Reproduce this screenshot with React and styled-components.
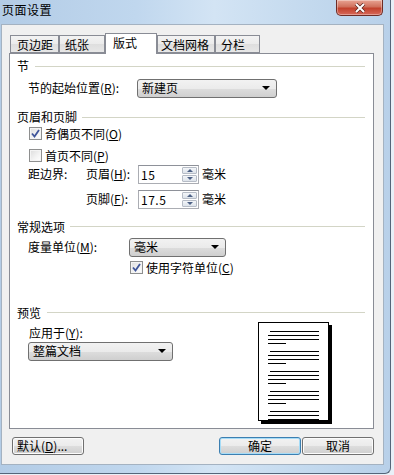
import React from "react";
import styled, { createGlobalStyle } from "styled-components";

const GlobalStyle = createGlobalStyle`
  html, body {
    margin: 0;
    padding: 0;
    background: #e9f0f8;
  }
  body {
    width: 394px;
    height: 475px;
    overflow: hidden;
    font-family: "Noto Sans CJK SC", "DejaVu Sans", sans-serif;
    font-size: 12px;
    color: #000;
  }
`;

const Window = styled.div`
  position: relative;
  width: 391px;
  height: 474px;
  padding: 0 6px 8px 1px;
  box-sizing: border-box;
  border-right: 1px solid #55667a;
  border-bottom: 1px solid #55667a;
  border-bottom-right-radius: 6px;
  background: linear-gradient(90deg, #b3cce6 0%, #c0d7ee 35%, #d3e4f4 55%, #c3d9ee 80%, #b8d0e9 100%);
  display: flex;
  flex-direction: column;
`;

const TitleBar = styled.div`
  height: 24px;
  display: flex;
  align-items: flex-start;
  justify-content: space-between;
`;

const Title = styled.span`
  margin: 2px 0 0 1px;
  font-size: 12px;
  line-height: 16px;
  letter-spacing: 0.5px;
`;

const CloseButton = styled.div`
  width: 45px;
  height: 15px;
  margin-right: 1px;
  border: 1px solid #6e2c25;
  border-top: none;
  border-radius: 0 0 5px 5px;
  background: linear-gradient(#e8a493 0%, #d0705c 45%, #c2412c 55%, #d7695a 100%);
  box-shadow: inset 0 0 0 1px rgba(255, 255, 255, 0.35);
  display: flex;
  align-items: center;
  justify-content: center;
`;

const Client = styled.div`
  height: 442px;
  box-sizing: border-box;
  border: 1px solid #a4b2c1;
  background: #f0f0f0;
  padding: 8px 9px 0 7px;
  display: flex;
  flex-direction: column;
`;

const TabRow = styled.div`
  display: flex;
  align-items: flex-end;
  height: 20px;
  padding-left: 1px;
`;

const Tab = styled.div`
  position: relative;
  box-sizing: border-box;
  width: ${(p) => p.$w}px;
  height: ${(p) => (p.$active ? 21 : 18)}px;
  margin-bottom: ${(p) => (p.$active ? -1 : 0)}px;
  z-index: ${(p) => (p.$active ? 2 : 1)};
  border: 1px solid #898c95;
  border-bottom: ${(p) => (p.$active ? "none" : "1px solid #898c95")};
  background: ${(p) =>
    p.$active ? "#fff" : "linear-gradient(#f3f3f3 0%, #ebebeb 50%, #dedede 51%, #e7e7e7 100%)"};
  padding-left: ${(p) => p.$pl}px;
  padding-top: 2px;
  font-size: 12px;
  line-height: 14px;
  white-space: nowrap;
`;

const Panel = styled.div`
  height: 376px;
  box-sizing: border-box;
  border: 1px solid #898c95;
  background: #fff;
  padding: 0 8px 0 7px;
  display: flex;
  flex-direction: column;
`;

const SectionHead = styled.div`
  height: 14px;
  margin-top: ${(p) => p.$mt}px;
  display: flex;
  align-items: center;
  gap: ${(p) => p.$gap ?? 6}px;
  line-height: 14px;
  white-space: nowrap;
`;

const Rule = styled.div`
  flex: 1;
  height: 1px;
  margin-top: ${(p) => p.$off ?? 2}px;
  background: #d3d5c6;
`;

const Row = styled.div`
  display: flex;
  align-items: center;
  height: ${(p) => p.$h ?? 19}px;
  margin-top: ${(p) => p.$mt}px;
  padding-left: ${(p) => p.$pl ?? 11}px;
  line-height: 14px;
  white-space: nowrap;
`;

const Label = styled.span`
  display: inline-block;
  width: ${(p) => (p.$w ? `${p.$w}px` : "auto")};
  flex: none;
`;

const Select = styled.div`
  box-sizing: border-box;
  width: ${(p) => p.$w}px;
  height: 19px;
  border: 1px solid #707070;
  border-radius: 3px;
  background: linear-gradient(#f2f2f2 0%, #ebebeb 50%, #dddddd 51%, #cfcfcf 100%);
  padding: 0 6px 0 4px;
  display: flex;
  align-items: center;
  justify-content: space-between;
  line-height: 14px;
`;

const Arrow = styled.span`
  width: 0;
  height: 0;
  border-left: 4px solid transparent;
  border-right: 4px solid transparent;
  border-top: 4px solid #000;
`;

const Box = styled.span`
  box-sizing: border-box;
  width: 13px;
  height: 13px;
  border: 1px solid #8e8f8f;
  background: linear-gradient(135deg, #dcdcdc 0%, #f4f4f4 60%, #ffffff 100%);
  box-shadow: inset 0 0 0 1px #f4f4f4;
  display: inline-flex;
  align-items: center;
  justify-content: center;
  margin-right: 3px;
  flex: none;
`;

const SpinField = styled.div`
  box-sizing: border-box;
  width: 61px;
  height: 19px;
  border: 1px solid #abadb3;
  border-top-color: #8e9199;
  background: #fff;
  display: flex;
  align-items: stretch;
  padding: 1px 1px 1px 2px;
`;

const SpinText = styled.span`
  flex: 1;
  line-height: 15px;
  letter-spacing: 0.5px;
`;

const SpinButtons = styled.div`
  width: 15px;
  display: flex;
  flex-direction: column;
  gap: 1px;
`;

const SpinBtn = styled.div`
  flex: 1;
  border: 1px solid #b6bcc6;
  border-radius: 1px;
  background: linear-gradient(#f4f6f9, #dde3ea);
  display: flex;
  align-items: center;
  justify-content: center;
`;

const Tri = styled.span`
  width: 0;
  height: 0;
  border-left: 3px solid transparent;
  border-right: 3px solid transparent;
  ${(p) => (p.$up ? "border-bottom: 3px solid #4d6185;" : "border-top: 3px solid #4d6185;")}
`;

const Unit = styled.span`
  margin-left: 3px;
`;

const PreviewRow = styled.div`
  display: flex;
  align-items: flex-start;
`;

const PreviewLeft = styled.div`
  width: 241px;
  padding-left: 11px;
  box-sizing: border-box;
  display: flex;
  flex-direction: column;
`;

const PageBox = styled.div`
  margin-top: 2px;
`;

const ButtonRow = styled.div`
  display: flex;
  align-items: center;
  margin-top: 8px;
  height: 18px;
`;

const Button = styled.div`
  box-sizing: border-box;
  width: ${(p) => p.$w}px;
  height: 18px;
  margin-left: ${(p) => p.$ml ?? 0}px;
  border: 1px solid ${(p) => (p.$def ? "#3c7fb1" : "#707070")};
  border-radius: 3px;
  background: linear-gradient(#f2f2f2 0%, #ebebeb 50%, #dddddd 51%, #cfcfcf 100%);
  box-shadow: ${(p) => (p.$def ? "inset 0 0 0 1px #a6dcf7" : "inset 0 0 0 1px #fcfcfc")};
  display: flex;
  align-items: center;
  justify-content: ${(p) => (p.$left ? "flex-start" : "center")};
  padding-left: ${(p) => (p.$left ? 4 : 0)}px;
  line-height: 14px;
  white-space: nowrap;
`;

const Check = ({ on }) => (
  <Box>
    {on && (
      <svg width="9" height="9" viewBox="0 0 9 9">
        <path d="M1 4.5 L3.5 7.5 L8 1" fill="none" stroke="#3f559a" strokeWidth="1.8" />
      </svg>
    )}
  </Box>
);

const Spin = ({ value }) => (
  <SpinField>
    <SpinText>{value}</SpinText>
    <SpinButtons>
      <SpinBtn>
        <Tri $up />
      </SpinBtn>
      <SpinBtn>
        <Tri />
      </SpinBtn>
    </SpinButtons>
  </SpinField>
);

function PagePreview() {
  const groups = [0, 1, 2, 3, 4];
  return (
    <svg width="74" height="102" viewBox="0 0 74 102">
      <rect x="3" y="3" width="71" height="99" fill="#000" />
      <rect x="0.5" y="0.5" width="70" height="98" fill="#fff" stroke="#000" />
      {groups.map((g) => {
        const y = 9.5 + g * 20;
        return (
          <g key={g} stroke="#000" strokeWidth="1">
            <line x1="12" y1={y} x2="61" y2={y} />
            <line x1="10" y1={y + 4} x2="61" y2={y + 4} />
            <line x1="10" y1={y + 8} x2="61" y2={y + 8} />
            <line x1="10" y1={y + 12} x2="28" y2={y + 12} />
          </g>
        );
      })}
    </svg>
  );
}

export default function App() {
  return (
    <>
      <GlobalStyle />
      <Window>
        <TitleBar>
          <Title>页面设置</Title>
          <CloseButton>
            <svg width="12" height="10" viewBox="0 0 12 10">
              <path d="M2 1 L10 9 M10 1 L2 9" stroke="#5a231c" strokeWidth="3.4" />
              <path d="M2 1 L10 9 M10 1 L2 9" stroke="#fff" strokeWidth="2" />
            </svg>
          </CloseButton>
        </TitleBar>
        <Client>
          <TabRow>
            <Tab $w={49} $pl={6}>页边距</Tab>
            <Tab $w={46} $pl={5}>纸张</Tab>
            <Tab $w={52} $pl={7} $active>版式</Tab>
            <Tab $w={58} $pl={3}>文档网格</Tab>
            <Tab $w={45} $pl={5}>分栏</Tab>
          </TabRow>
          <Panel>
            <SectionHead $mt={5}>
              <span>节</span>
              <Rule />
            </SectionHead>
            <Row $mt={6}>
              <Label $w={109}>节的起始位置(<u>R</u>):</Label>
              <Select $w={140}>
                <span>新建页</span>
                <Arrow />
              </Select>
            </Row>

            <SectionHead $mt={12} $gap={5}>
              <span>页眉和页脚</span>
              <Rule />
            </SectionHead>
            <Row $mt={3} $h={14} $pl={12}>
              <Check on />
              <span>奇偶页不同(<u>O</u>)</span>
            </Row>
            <Row $mt={8} $h={14} $pl={12}>
              <Check />
              <span>首页不同(<u>P</u>)</span>
            </Row>
            <Row $mt={2}>
              <Label $w={58}>距边界:</Label>
              <Label $w={52}>页眉(<u>H</u>):</Label>
              <Spin value="15" />
              <Unit>毫米</Unit>
            </Row>
            <Row $mt={6}>
              <Label $w={58} />
              <Label $w={52}>页脚(<u>F</u>):</Label>
              <Spin value="17.5" />
              <Unit>毫米</Unit>
            </Row>

            <SectionHead $mt={11} $gap={5}>
              <span>常规选项</span>
              <Rule $off={0} />
            </SectionHead>
            <Row $mt={4}>
              <Label $w={101}>度量单位(<u>M</u>):</Label>
              <Select $w={97}>
                <span>毫米</span>
                <Arrow />
              </Select>
            </Row>
            <Row $mt={4} $h={14} $pl={113}>
              <Check on />
              <span>使用字符单位(<u>C</u>)</span>
            </Row>

            <SectionHead $mt={31} $gap={6}>
              <span>预览</span>
              <Rule $off={0} />
            </SectionHead>
            <PreviewRow>
              <PreviewLeft>
                <Row $mt={6} $h={14} $pl={1}>
                  应用于(<u>Y</u>):
                </Row>
                <Row $mt={2} $pl={0}>
                  <Select $w={145}>
                    <span>整篇文档</span>
                    <Arrow />
                  </Select>
                </Row>
              </PreviewLeft>
              <PageBox>
                <PagePreview />
              </PageBox>
            </PreviewRow>
          </Panel>
          <ButtonRow>
            <Button $w={72} $ml={3} $left>
              默认(<u>D</u>)...
            </Button>
            <Button $w={82} $ml={135} $def>
              确定
            </Button>
            <Button $w={72} $ml={1}>
              取消
            </Button>
          </ButtonRow>
        </Client>
      </Window>
    </>
  );
}
